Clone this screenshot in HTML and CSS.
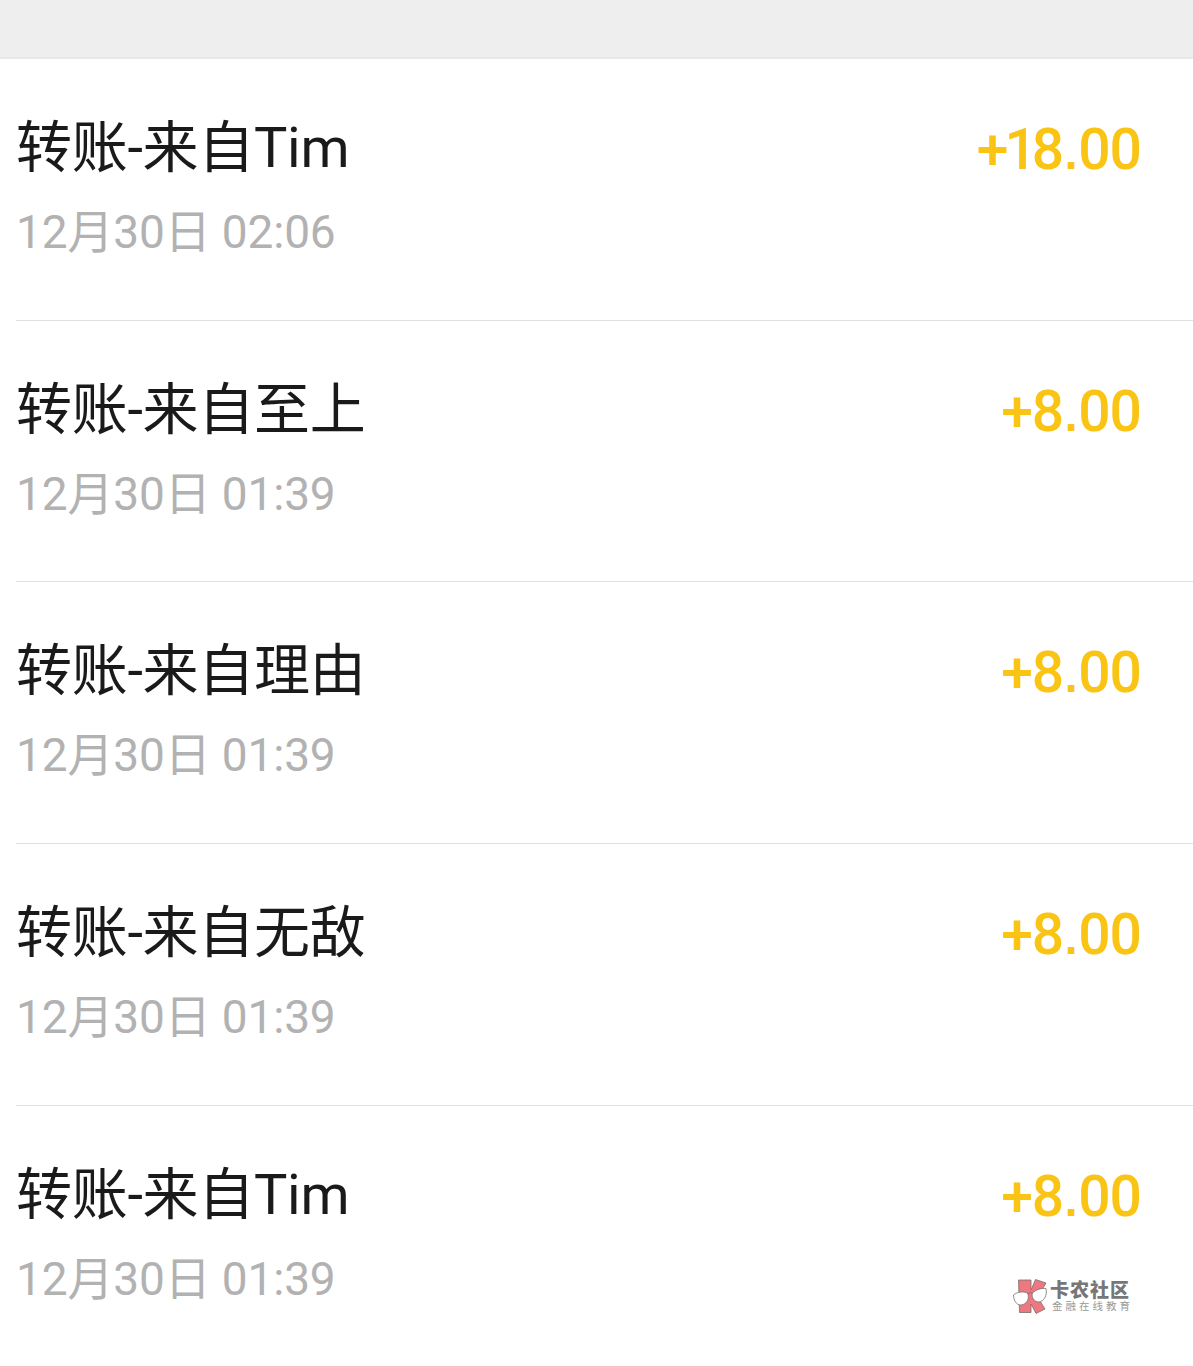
FILE: index.html
```
<!DOCTYPE html>
<html lang="zh-CN">
<head>
    <meta charset="UTF-8">
    <meta name="viewport" content="width=device-width, initial-scale=1.0">
    <title>转账记录</title>
    <link rel="stylesheet" href="styles.css">
</head>
<body>
    <div class="top-bar"></div>

    <div class="list">
        <div class="item">
            <div class="info">
                <div class="title">转账-来自Tim</div>
                <div class="date">12月30日 02:06</div>
            </div>
            <div class="amount"><span class="tight">+</span><span class="one">1</span>8<span class="dot">.</span>00</div>
        </div>
        <div class="item">
            <div class="info">
                <div class="title">转账-来自至上</div>
                <div class="date">12月30日 01:39</div>
            </div>
            <div class="amount">+8<span class="dot">.</span>00</div>
        </div>
        <div class="item">
            <div class="info">
                <div class="title">转账-来自理由</div>
                <div class="date">12月30日 01:39</div>
            </div>
            <div class="amount">+8<span class="dot">.</span>00</div>
        </div>
        <div class="item">
            <div class="info">
                <div class="title">转账-来自无敌</div>
                <div class="date">12月30日 01:39</div>
            </div>
            <div class="amount">+8<span class="dot">.</span>00</div>
        </div>
        <div class="item">
            <div class="info">
                <div class="title">转账-来自Tim</div>
                <div class="date">12月30日 01:39</div>
            </div>
            <div class="amount">+8<span class="dot">.</span>00</div>
        </div>
    </div>

    <div class="watermark">
        <svg class="logo" width="36" height="36" viewBox="0 0 36 36">
            <g fill="#ed7880" stroke="#77706f" stroke-width="0.8">
                <path d="M6.500 2H19V12L23.500 1.500L34 5L25.500 19L33 31L24 35.500L19 26V34.500H7.500Z"/>
            </g>
            <g fill="#fff" stroke="#77706f" stroke-width="0.8">
                <path d="M1.500 17C5 14 11 13 15.500 15C18 20 15 26.500 9 27C4 27 1.500 22 1.500 17Z"/>
                <path d="M20.500 15C24 11.500 29 10 34 10.500C35.500 17 32 23.500 27 24C22 24 19 19 20.500 15Z"/>
                <path d="M15.500 15.500L20.500 14.500" fill="none"/>
            </g>
        </svg>
        <div class="brand">
            <div class="brand-name">卡农社区</div>
            <div class="brand-sub">金融在线教育</div>
        </div>
    </div>
</body>
</html>
```

FILE: styles.css
```
body {
    margin: 0;
    height: 1366px;
    overflow: hidden;
    position: relative;
    background: #fff;
    font-family: Roboto, "Noto Sans CJK SC", sans-serif;
}

.top-bar {
    height: 59px;
    box-sizing: border-box;
    background: #eee;
    border-bottom: 2px solid #e8e8e8;
}

.list {
    padding-left: 16px;
}

.item {
    display: flex;
    justify-content: space-between;
    height: 261.7px;
    box-sizing: border-box;
    padding: 49px 52px 0 0;
    border-bottom: 1px solid #e0e0e0;
}

.item:last-child {
    border-bottom: none;
}

.title {
    font-size: 56px;
    line-height: 80px;
    letter-spacing: -0.3px;
    color: #1a1a1a;
}

.date {
    margin-top: 11px;
    font-size: 46px;
    line-height: 66px;
    letter-spacing: -0.15px;
    color: #b2b2b2;
}

.amount {
    height: 80px;
    font-size: 57px;
    font-weight: 500;
    line-height: 83px;
    letter-spacing: -1px;
    color: #fac414;
}

.tight {
    letter-spacing: -4px;
}

.one {
    letter-spacing: -5px;
}

.dot {
    display: inline-block;
    width: 15px;
    font-family: "Liberation Sans", sans-serif;
    font-size: 46px;
    font-weight: bold;
    line-height: 1;
    text-align: center;
}

.watermark {
    position: absolute;
    left: 1012px;
    top: 1278px;
    display: flex;
    gap: 2px;
}

.brand-name {
    margin-top: 2px;
    font-size: 19px;
    line-height: 22px;
    font-weight: 900;
    letter-spacing: 1px;
    color: #777;
}

.brand-sub {
    margin-top: -2px;
    padding-left: 2px;
    font-size: 10.5px;
    line-height: 13px;
    letter-spacing: 3px;
    color: #999;
}
```
